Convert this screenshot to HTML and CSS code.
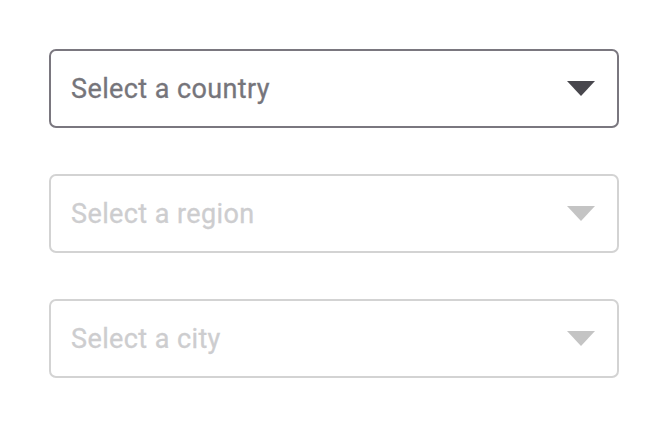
FILE: index.html
```html
<!DOCTYPE html>
<html>
<head>
	<title>Location select</title>
	<link rel="stylesheet" href="styles.css">
</head>
<body>
	<div class="form">
		<div class="select">
			<span class="select-label">Select a country</span>
			<span class="select-arrow"></span>
		</div>
		<div class="select disabled">
			<span class="select-label">Select a region</span>
			<span class="select-arrow"></span>
		</div>
		<div class="select disabled">
			<span class="select-label">Select a city</span>
			<span class="select-arrow"></span>
		</div>
	</div>
</body>
</html>
```

FILE: styles.css
```css
body {
	font-family: Roboto, "Liberation Sans", sans-serif;
	margin: 0;
	padding: 0;
	background-color: #FFFFFF;
}

.form {
	display: flex;
	flex-direction: column;
	gap: 46px;
	width: 570px;
	padding: 49px 0 0 49px;
}

.select {
	display: flex;
	align-items: center;
	justify-content: space-between;
	box-sizing: border-box;
	height: 79px;
	padding: 0 22px 0 20px;
	border: 2px solid #7A777F;
	border-radius: 7px;
}

.select-label {
	font-size: 27px;
	letter-spacing: 0.4px;
	-webkit-text-stroke: 0.3px currentColor;
	color: #76757B;
}

.select-arrow {
	width: 0;
	height: 0;
	border-left: 14px solid transparent;
	border-right: 14px solid transparent;
	border-top: 15px solid #48474D;
}

.select.disabled {
	border-color: #D3D3D3;
}

.select.disabled .select-label {
	color: #CDCDCF;
}

.select.disabled .select-arrow {
	border-top-color: #C4C4C4;
}
```
